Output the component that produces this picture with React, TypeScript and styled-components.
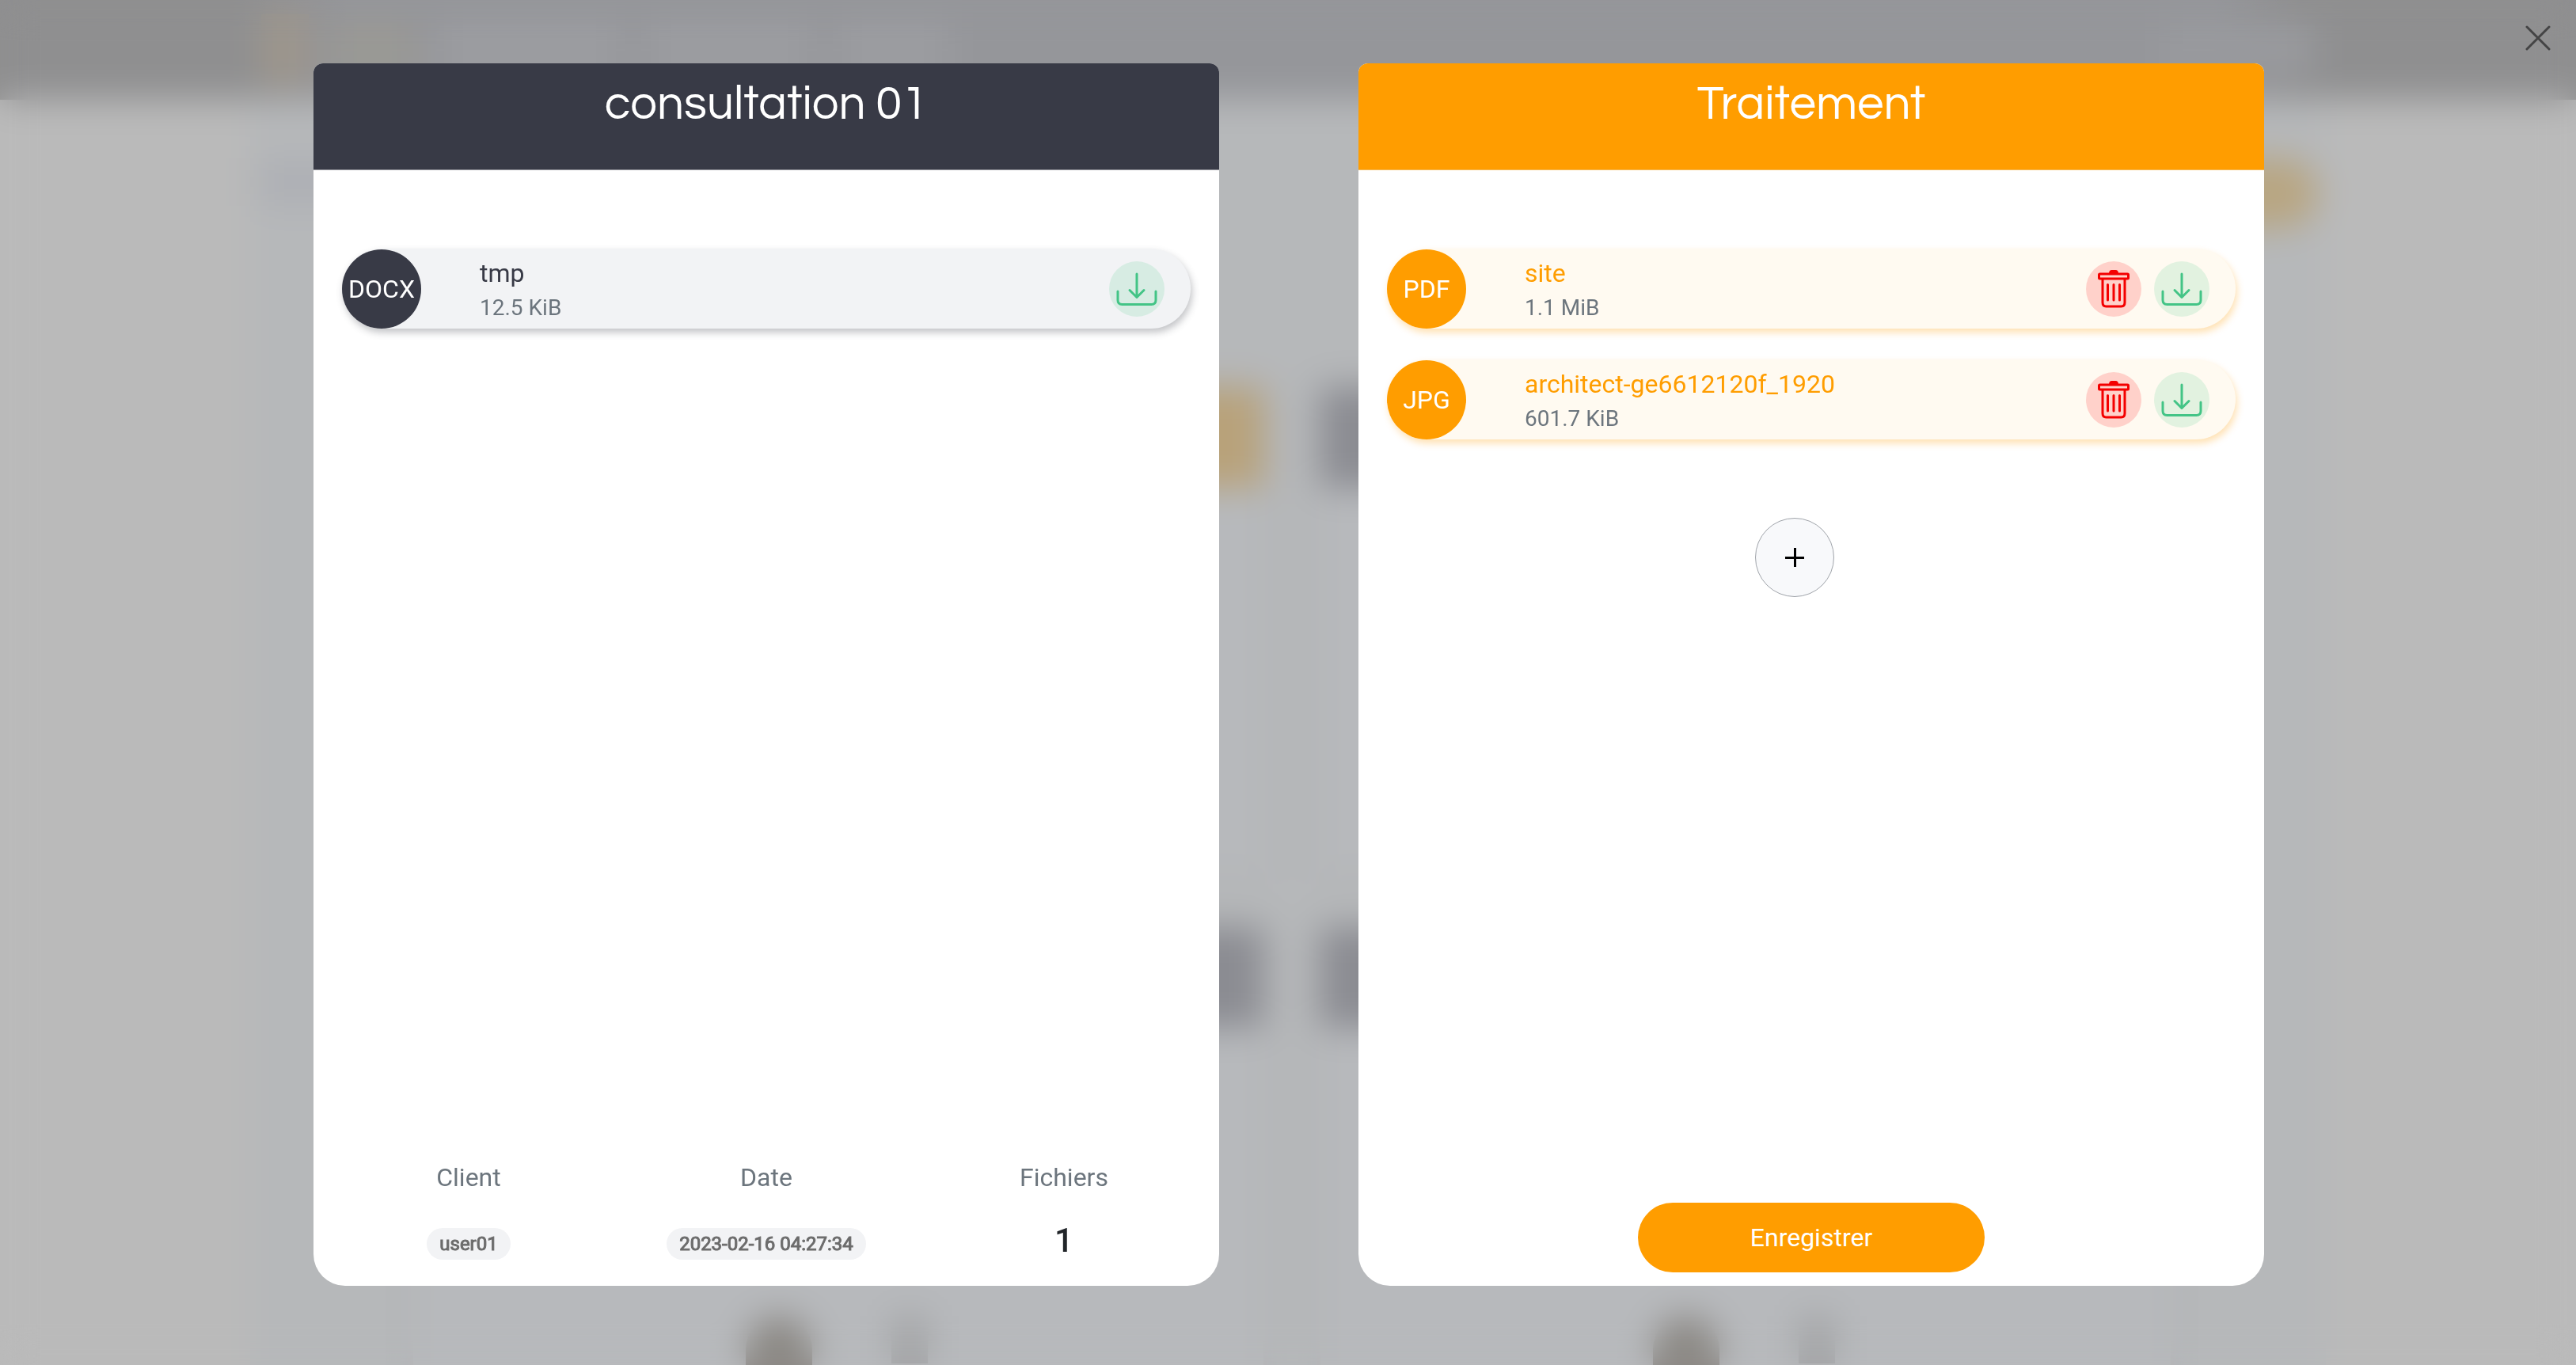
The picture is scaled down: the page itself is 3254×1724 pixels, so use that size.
import React from "react";
import styled, { createGlobalStyle, css } from "styled-components";

const dark = "#383a46";
const orange = "#ff9d00";

const GlobalStyle = createGlobalStyle`
  *, *::before, *::after { box-sizing: border-box; }
  body {
    margin: 0;
    background: #bababa;
    font-family: Roboto, "Liberation Sans", sans-serif;
    font-size: 32px;
    color: #212529;
  }
  button { font: inherit; border: 0; cursor: pointer; padding: 0; }
`;

/* ---------- page behind the dialog ---------- */

const Backdrop = styled.div`
  position: fixed;
  inset: 0;
  overflow: hidden;
  background: #bababa;
`;

const SiteBar = styled.div`
  height: 126px;
  padding: 0 330px;
  display: flex;
  align-items: center;
  gap: 32px;
  background: linear-gradient(90deg, #8f8f90 300px, #95969a 440px, #95969a 2800px, #8f8f90 2900px);
`;

const SiteMark = styled.div`
  width: 60px;
  height: 90px;
  background: #9d968c;
`;

const SiteLink = styled.div<{ $width: number; $tone?: string }>`
  width: ${(p) => p.$width}px;
  height: 64px;
  background: ${(p) => p.$tone ?? "#9c9da1"};
`;

const Push = styled.div`
  flex: 1;
`;

const SiteBody = styled.div`
  margin: 0 316px;
  padding: 74px 10px 0;
  min-height: 1602px;
  background: #b6b8ba;
`;

const SiteTools = styled.div`
  display: flex;
  justify-content: space-between;
`;

const SiteTitle = styled.div`
  width: 400px;
  height: 60px;
  background: #aeb0b5;
`;

const SitePill = styled.div`
  width: 300px;
  height: 88px;
  border-radius: 44px;
  background: #b8a682;
`;

const SiteCards = styled.div`
  display: grid;
  grid-template-columns: 1fr 1fr;
  gap: 72px;
  padding: 202px 186px 0 196px;
`;

const SiteCard = styled.div`
  height: 610px;
  background: #b7b9bc;
  box-shadow: 0 0 30px #afb0b2;
`;

const SiteCardHead = styled.div<{ $tone: string }>`
  height: 126px;
  background: ${(p) => p.$tone};
`;

const SiteCardFoot = styled.div`
  display: flex;
  align-items: flex-start;
  gap: 100px;
  padding: 364px 0 0 420px;
`;

const SiteThumb = styled.div`
  width: 84px;
  height: 120px;
  border-radius: 42px 42px 0 0;
  background: #8c8985;
`;

const SiteCount = styled.div`
  width: 46px;
  height: 60px;
  background: #a3a4a6;
`;

/* ---------- dialog ---------- */

const Overlay = styled.div`
  position: relative;
  min-height: 100vh;
  padding: 80px 394px 100px 396px;
  display: grid;
  grid-template-columns: 1fr 1fr;
  gap: 176px;
  backdrop-filter: blur(22px);
`;

const CloseButton = styled.button`
  position: absolute;
  top: 32px;
  right: 32px;
  width: 32px;
  height: 32px;
  background: none;
  svg { display: block; }
`;

const Panel = styled.section`
  display: flex;
  flex-direction: column;
  background: #fff;
  border-radius: 12px 12px 40px 40px;
  overflow: hidden;
`;

const PanelHead = styled.header<{ $accent?: boolean }>`
  height: 135px;
  padding-top: 16px;
  background: ${(p) => (p.$accent ? orange : dark)};
  border-bottom: 1px solid ${(p) => (p.$accent ? "#f3b858" : "#98999f")};
`;

const PanelTitle = styled.h2`
  margin: 0;
  font-family: Questrial, Inter, sans-serif;
  font-size: 60px;
  line-height: 72px;
  font-weight: 400;
  text-align: center;
  color: #fff;
`;

const FileList = styled.ul`
  list-style: none;
  margin: 0;
  padding: 99px 36px 0;
  display: flex;
  flex-direction: column;
  gap: 39px;
`;

const FileRow = styled.li<{ $accent?: boolean }>`
  display: flex;
  align-items: center;
  height: 101px;
  padding-right: 33px;
  border-radius: 51px;
  ${(p) =>
    p.$accent
      ? css`
          background: #fffaf1;
          box-shadow: 2px 5px 10px rgba(255, 157, 0, 0.3);
        `
      : css`
          background: #f2f3f5;
          box-shadow: 2px 5px 10px rgba(56, 58, 70, 0.3);
        `}
`;

const FileType = styled.span<{ $accent?: boolean }>`
  display: flex;
  align-items: center;
  justify-content: center;
  width: 100px;
  height: 100px;
  border-radius: 50%;
  background: ${(p) => (p.$accent ? orange : dark)};
  color: #fff;
`;

const FileText = styled.div`
  flex: 1;
  padding: 4px 0 0 74px;
`;

const FileName = styled.div<{ $accent?: boolean }>`
  line-height: 44px;
  color: ${(p) => (p.$accent ? orange : dark)};
`;

const FileSize = styled.div`
  font-size: 28px;
  line-height: 44px;
  color: #6c757d;
`;

const FileActions = styled.div`
  display: flex;
  gap: 16px;
`;

const RoundButton = styled.button<{ $danger?: boolean }>`
  display: flex;
  align-items: center;
  justify-content: center;
  width: 70px;
  height: 70px;
  border-radius: 50%;
  background: ${(p) => (p.$danger ? "rgba(255, 0, 0, 0.16)" : "rgba(62, 198, 130, 0.15)")};
`;

const AddLine = styled.div`
  display: flex;
  justify-content: center;
  padding: 99px 42px 0 0;
`;

const AddButton = styled.button`
  display: flex;
  align-items: center;
  justify-content: center;
  width: 100px;
  height: 100px;
  border: 1px solid #a0a4aa;
  border-radius: 50%;
  background: #f8f9fb;
`;

const Facts = styled.dl`
  display: grid;
  grid-template-columns: repeat(3, 1fr);
  margin: auto 0 0;
  padding: 0 8px 33px;
  text-align: center;
`;

const FactLabel = styled.dt`
  line-height: 48px;
  color: #6c757d;
`;

const FactValue = styled.dd`
  display: flex;
  justify-content: center;
  align-items: flex-end;
  height: 48px;
  margin: 32px 0 0;
`;

const Badge = styled.span`
  padding: 0 16px;
  border-radius: 20px;
  background: #f2f3f5;
  font-size: 24px;
  line-height: 40px;
  color: #6c6c6c;
  -webkit-text-stroke: 1px #6c6c6c;
`;

const Count = styled.span`
  font-size: 42px;
  line-height: 48px;
  font-weight: 500;
`;

const PanelFoot = styled.footer`
  display: flex;
  justify-content: center;
  margin-top: auto;
  padding-bottom: 17px;
`;

const SaveButton = styled.button`
  width: 438px;
  height: 88px;
  border-radius: 44px;
  background: ${orange};
  color: #fff;
`;

const DownloadIcon = () => (
  <svg width="52" height="42" viewBox="0 0 52 42" fill="none" stroke="#43c486" strokeWidth="3" strokeLinecap="round" strokeLinejoin="round">
    <path d="M26 2v29M17 22.500l9 9 9-9" />
    <path d="M2 24v11q0 5.500 5.500 5.500h37q5.500 0 5.500-5.500V24" />
  </svg>
);

const TrashIcon = () => (
  <svg width="40" height="48" viewBox="0 0 40 48" fill="none" stroke="#f40000" strokeWidth="3" strokeLinecap="round" strokeLinejoin="round">
    <rect x="1.500" y="5" width="37" height="6" rx="1" />
    <path d="M14 4.500q0-4.500 3.500-4.500h5q3.500 0 3.500 4.500z" fill="#f40000" stroke="none" />
    <path d="M6 11.500V41q0 5 4.500 5h19q4.500 0 4.500-5V11.500" />
    <path d="M12.500 18.500V38M20 18.500V38M27.500 18.500V38" />
  </svg>
);

interface FileItem {
  type: string;
  name: string;
  size: string;
}

const sources: FileItem[] = [{ type: "DOCX", name: "tmp", size: "12.5 KiB" }];
const results: FileItem[] = [
  { type: "PDF", name: "site", size: "1.1 MiB" },
  { type: "JPG", name: "architect-ge6612120f_1920", size: "601.7 KiB" },
];

const Files = ({ items, accent }: { items: FileItem[]; accent?: boolean }) => (
  <FileList>
    {items.map((f) => (
      <FileRow key={f.name} $accent={accent}>
        <FileType $accent={accent}>{f.type}</FileType>
        <FileText>
          <FileName $accent={accent}>{f.name}</FileName>
          <FileSize>{f.size}</FileSize>
        </FileText>
        <FileActions>
          {accent && (
            <RoundButton $danger type="button" aria-label="Supprimer">
              <TrashIcon />
            </RoundButton>
          )}
          <RoundButton type="button" aria-label="Télécharger">
            <DownloadIcon />
          </RoundButton>
        </FileActions>
      </FileRow>
    ))}
  </FileList>
);

const cardTones = ["#b8a27a", "#8b8c92", "#8b8c92", "#8b8c92"];

export default function App() {
  return (
    <>
      <GlobalStyle />
      <Backdrop aria-hidden="true">
        <SiteBar>
          <SiteMark />
          <SiteLink $width={100} $tone="#9a9994" />
          <SiteLink $width={230} />
          <SiteLink $width={210} />
          <SiteLink $width={140} />
          <Push />
          <SiteLink $width={190} $tone="#999a9e" />
        </SiteBar>
        <SiteBody>
          <SiteTools>
            <SiteTitle />
            <SitePill />
          </SiteTools>
          <SiteCards>
            {cardTones.map((tone, i) => (
              <SiteCard key={i}>
                <SiteCardHead $tone={tone} />
                {i > 1 && (
                  <SiteCardFoot>
                    <SiteThumb />
                    <SiteCount />
                  </SiteCardFoot>
                )}
              </SiteCard>
            ))}
          </SiteCards>
        </SiteBody>
      </Backdrop>
      <Overlay role="dialog" aria-label="consultation 01">
        <Panel>
          <PanelHead>
            <PanelTitle>consultation 01</PanelTitle>
          </PanelHead>
          <Files items={sources} />
          <Facts>
            <div>
              <FactLabel>Client</FactLabel>
              <FactValue><Badge>user01</Badge></FactValue>
            </div>
            <div>
              <FactLabel>Date</FactLabel>
              <FactValue><Badge>2023-02-16 04:27:34</Badge></FactValue>
            </div>
            <div>
              <FactLabel>Fichiers</FactLabel>
              <FactValue><Count>1</Count></FactValue>
            </div>
          </Facts>
        </Panel>
        <Panel>
          <PanelHead $accent>
            <PanelTitle>Traitement</PanelTitle>
          </PanelHead>
          <Files items={results} accent />
          <AddLine>
            <AddButton type="button" aria-label="Ajouter">
              <svg width="24" height="24" viewBox="0 0 24 24" stroke="#000" strokeWidth="3">
                <path d="M12.500 0v24M0 12.500h24" />
              </svg>
            </AddButton>
          </AddLine>
          <PanelFoot>
            <SaveButton type="button">Enregistrer</SaveButton>
          </PanelFoot>
        </Panel>
        <CloseButton type="button" aria-label="Fermer">
          <svg width="32" height="32" viewBox="0 0 32 32" stroke="#444445" strokeWidth="3" strokeLinecap="round">
            <path d="M2 2l28 28M30 2L2 30" />
          </svg>
        </CloseButton>
      </Overlay>
    </>
  );
}
